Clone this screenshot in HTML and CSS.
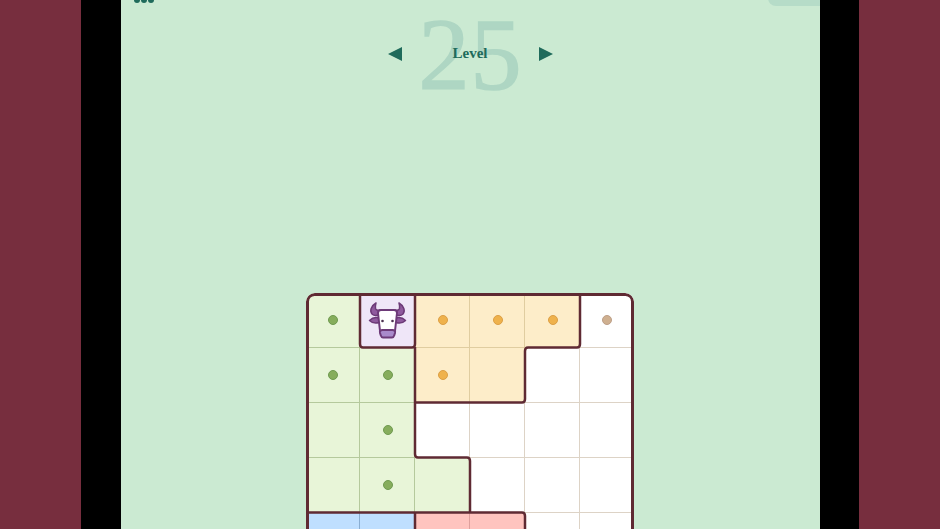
FILE: index.html
```html
<!DOCTYPE html>
<html lang="en">
  <head>
    <meta charset="utf-8" />
    <meta name="viewport" content="width=device-width, initial-scale=1" />
    <title>Level 25</title>
    <link rel="stylesheet" href="styles.css">
  </head>
  <body>
    <div class="frame">
      <div class="side"></div>
      <div class="bezel"></div>
      <main class="screen">
        <!-- bits of the top bar that are cut off by the edge of the shot -->
        <div class="menu-dots"><span></span><span></span><span></span></div>
        <div class="corner-tab"></div>

        <header class="level">
          <span class="arrow arrow-left"></span>
          <div class="level-title">
            <span class="level-num">25</span>
            <span class="level-label">Level</span>
          </div>
          <span class="arrow arrow-right"></span>
        </header>

        <div class="board">
          <div class="cell green"><i class="dot dot-green"></i></div>
          <div class="cell lilac">
            <svg class="bull" viewBox="0 0 55 55">
              <path class="bull-part" d="M16 10C11 13 9.500 18 12 21C14 23 18 22.500 21 21L20 17C18 17.500 16 17 15.500 15.500C15 13.500 15.500 12 16 10Z" />
              <path class="bull-part" d="M39 10C44 13 45.500 18 43 21C41 23 37 22.500 34 21L35 17C37 17.500 39 17 39.500 15.500C40 13.500 39.500 12 39 10Z" />
              <path class="bull-part" d="M19 25C15.500 24 12 25 9.500 27.500C12 30 15.500 30.500 19 29.500Z" />
              <path class="bull-part" d="M36 25C39.500 24 43 25 45.500 27.500C43 30 39.500 30.500 36 29.500Z" />
              <path class="bull-head" d="M21 17H34C36 17 37 18 37 20L35 38H20L18 20C18 18 19 17 21 17Z" />
              <path class="bull-muzzle" d="M22.500 37H32.500C34.500 37 35.500 38 35 40L34.200 42.500C33.700 44 33 44.500 32 44.500H23C22 44.500 21.300 44 20.800 42.500L20 40C19.500 38 20.500 37 22.500 37Z" />
              <circle class="bull-eye" cx="22.500" cy="28" r="1.300" />
              <circle class="bull-eye" cx="32.500" cy="28" r="1.300" />
            </svg>
          </div>
          <div class="cell orange"><i class="dot dot-orange"></i></div>
          <div class="cell orange"><i class="dot dot-orange"></i></div>
          <div class="cell orange"><i class="dot dot-orange"></i></div>
          <div class="cell white"><i class="dot dot-tan"></i></div>

          <div class="cell green"><i class="dot dot-green"></i></div>
          <div class="cell green"><i class="dot dot-green"></i></div>
          <div class="cell orange"><i class="dot dot-orange"></i></div>
          <div class="cell orange"></div>
          <div class="cell white"></div>
          <div class="cell white"></div>

          <div class="cell green"></div>
          <div class="cell green"><i class="dot dot-green"></i></div>
          <div class="cell white"></div>
          <div class="cell white"></div>
          <div class="cell white"></div>
          <div class="cell white"></div>

          <div class="cell green"></div>
          <div class="cell green"><i class="dot dot-green"></i></div>
          <div class="cell green"></div>
          <div class="cell white"></div>
          <div class="cell white"></div>
          <div class="cell white"></div>

          <div class="cell blue"></div>
          <div class="cell blue"></div>
          <div class="cell red"></div>
          <div class="cell red"></div>
          <div class="cell white"></div>
          <div class="cell white"></div>

          <!-- region outlines go on top of the cells -->
          <svg class="outlines" viewBox="0 0 328 275">
            <path d="M54 0V51Q54 54.500 57 54.500H106Q109 54.500 109 51V0" />
            <path d="M109 54V161Q109 164.500 112 164.500H161Q164 164.500 164 168V219" />
            <path d="M109 109.500H216Q219 109.500 219 106V58Q219 54.500 222 54.500H271Q274 54.500 274 51V0" />
            <path d="M0 219.500H216Q219 219.500 219 223V275" />
            <path d="M109 219V275" />
            <rect x="1.500" y="1.500" width="325" height="300" rx="7" />
          </svg>
        </div>
      </main>
      <div class="bezel"></div>
      <div class="side"></div>
    </div>
  </body>
</html>
```

FILE: styles.css
```css
html,
body {
  margin: 0;
  height: 100%;
  overflow: hidden;
}

.frame {
  display: flex;
  width: 940px;
  height: 529px;
  overflow: hidden;
}

.side {
  width: 81px;
  background-color: #772e3e;
}

.bezel {
  width: 39.5px;
  background-color: #000;
}

.screen {
  position: relative;
  flex: 1;
  display: flex;
  flex-direction: column;
  align-items: center;
  overflow: hidden;
  background-color: #cbead2;
}

.menu-dots {
  position: absolute;
  top: -3px;
  left: 13px;
  display: flex;
  gap: 1px;
}

.menu-dots span {
  width: 6px;
  height: 6px;
  border-radius: 50%;
  background-color: #1f6b5b;
}

.corner-tab {
  position: absolute;
  top: -8px;
  right: 0;
  width: 52px;
  height: 14px;
  border-radius: 0 0 0 8px;
  background-color: #b6dcc8;
}

/* level picker */
.level {
  display: flex;
  align-items: center;
  justify-content: center;
  height: 107px;
  flex-shrink: 0;
}

.level-title {
  position: relative;
  display: flex;
  align-items: center;
  justify-content: center;
  width: 137px;
  height: 107px;
}

.level-num {
  position: absolute;
  top: 5px;
  left: 17px;
  font-family: "Liberation Serif", serif;
  font-size: 102px;
  line-height: 100px;
  letter-spacing: 1px;
  -webkit-text-stroke: 1.5px #aed6c3;
  color: #aed6c3;
}

.level-label {
  position: relative;
  font-family: "Liberation Serif", serif;
  font-size: 15px;
  font-weight: bold;
  color: #1f6b5b;
}

.arrow {
  width: 0;
  height: 0;
  border-top: 7px solid transparent;
  border-bottom: 7px solid transparent;
}

.arrow-left {
  border-right: 14px solid #1f6b5b;
}

.arrow-right {
  border-left: 14px solid #1f6b5b;
}

/* board */
.board {
  position: relative;
  display: grid;
  grid-template-columns: 54px repeat(4, 55px) 54px;
  grid-auto-rows: 55px;
  flex-shrink: 0;
  margin-top: 186px;
  border-radius: 9px;
  overflow: hidden;
}

.cell {
  display: flex;
  align-items: center;
  justify-content: center;
  box-shadow: inset -1px -1px 0 var(--line);
}

.green {
  --line: #b5c99c;
  background-color: #e8f5d8;
}

.lilac {
  --line: #cfc0dc;
  background-color: #efe6f8;
}

.orange {
  --line: #e0cda0;
  background-color: #fdedc9;
}

.white {
  --line: #ddd3c6;
  background-color: #fff;
}

.blue {
  --line: #8aaed2;
  background-color: #bfdfff;
}

.red {
  --line: #dfa09c;
  background-color: #ffc4bf;
}

.dot {
  width: 8px;
  height: 8px;
  margin-bottom: 1px;
  border-radius: 50%;
  border: 1px solid;
}

.dot-green {
  background-color: #86ad5c;
  border-color: #6f9a50;
}

.dot-orange {
  background-color: #efb24c;
  border-color: #dc9f45;
}

.dot-tan {
  background-color: #cfb090;
  border-color: #bd9f88;
}

.bull {
  width: 55px;
  height: 55px;
  flex-shrink: 0;
}

.bull-part {
  fill: #8f5a9e;
  stroke: #6d3a78;
  stroke-width: 1.500;
  stroke-linejoin: round;
}

.bull-head {
  fill: #fff;
  stroke: #6d3a78;
  stroke-width: 2;
  stroke-linejoin: round;
}

.bull-muzzle {
  fill: #a98acb;
  stroke: #6d3a78;
  stroke-width: 2;
  stroke-linejoin: round;
}

.bull-eye {
  fill: #4a3050;
}

.outlines {
  position: absolute;
  top: 0;
  left: 0;
  width: 328px;
  height: 275px;
  fill: none;
  stroke: #5f2a33;
  stroke-width: 2.500;
}

.outlines rect {
  stroke-width: 3;
}
```
